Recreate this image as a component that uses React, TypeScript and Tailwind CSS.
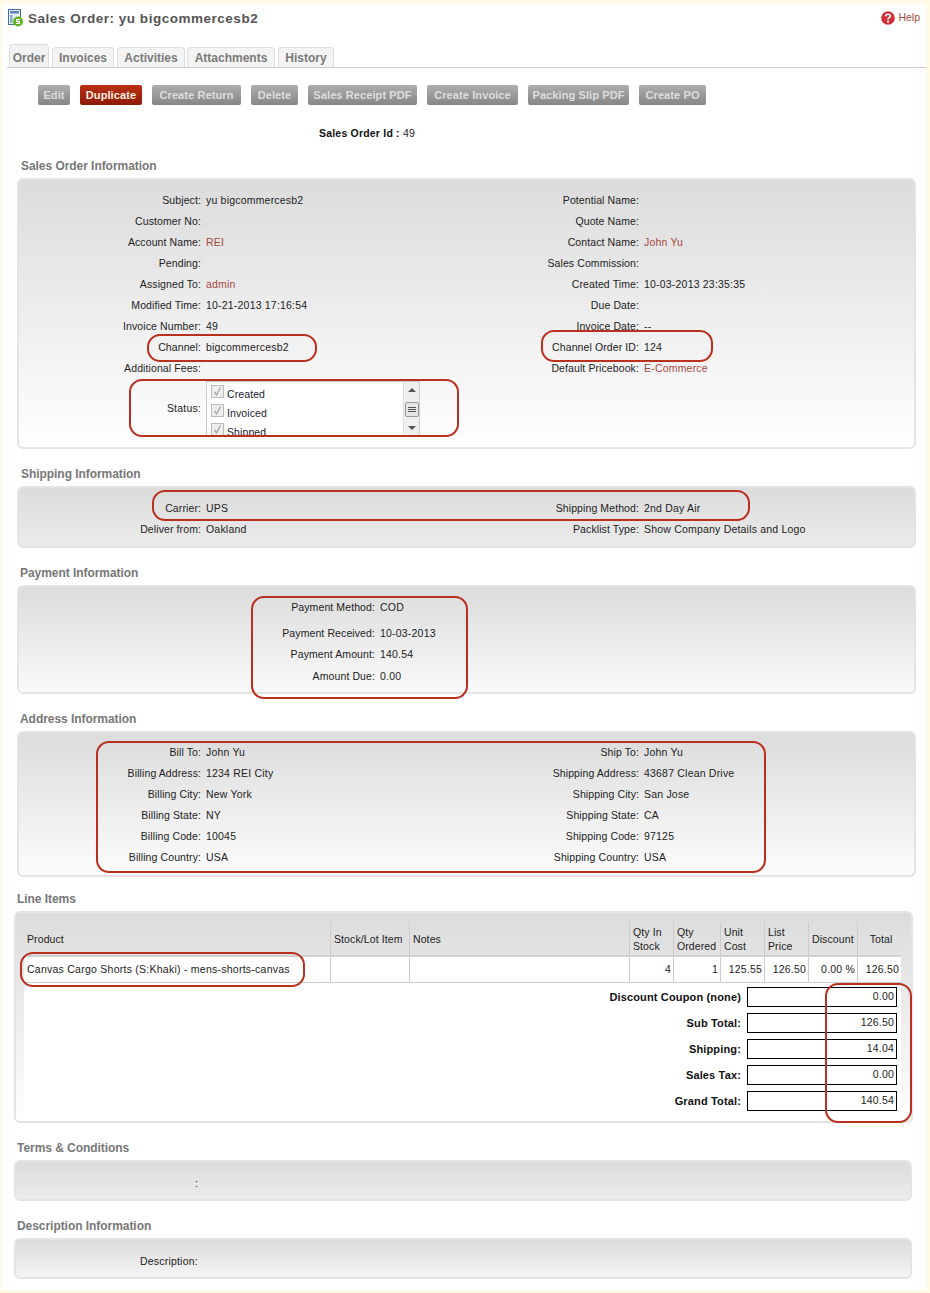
const font = "font-['Liberation_Sans',Arial,sans-serif]";

const Oval = ({ className }: { className: string }) => (
  <div className={`absolute border-2 border-[#b9301f] rounded-[13px] pointer-events-none ${className}`}></div>
);

const Row = ({
  label,
  value,
  label2,
  value2,
  red,
  red2,
}: {
  label?: string;
  value?: string;
  label2?: string;
  value2?: string;
  red?: boolean;
  red2?: boolean;
}) => (
  <div className="flex items-center h-[21px]">
    <div className="w-[182px] text-right tracking-[0.1px]">{label}</div>
    <div className={`ml-[5px] w-[233px] ${red ? "text-[#a5483d]" : ""}`}>{value}</div>
    <div className="w-[200px] text-right tracking-[0.1px]">{label2}</div>
    <div className={`ml-[5px] ${red2 ? "text-[#a5483d]" : ""}`}>{value2}</div>
  </div>
);

const Panel = ({
  title,
  className,
  titleClass = "ml-[4px]",
  children,
}: {
  title: string;
  className: string;
  titleClass?: string;
  children?: React.ReactNode;
}) => (
  <section>
    <h2 className={`text-[12px] leading-[14px] font-bold tracking-[-0.05px] text-[#777] mb-[5px] ${titleClass}`}>{title}</h2>
    <div className={`border-2 border-[#e4e4e4] rounded-[6px] bg-gradient-to-b from-[#dcdcdc] ${className}`}>
      {children}
    </div>
  </section>
);

const Check = ({ label }: { label: string }) => (
  <div className="flex items-end h-[19px]">
    <span className="w-[13px] h-[13px] border border-[#bbb] bg-[#eee] flex items-center justify-center ml-[4px] mb-[3px]">
      <svg width="11" height="11" viewBox="0 0 11 11">
        <path d="M2.5 6 L4.5 9 L8.5 1.5" fill="none" stroke="#aaa" strokeWidth="1.4" />
      </svg>
    </span>
    <span className="ml-[3px] text-[#223] leading-[14px] tracking-[0.1px]">{label}</span>
  </div>
);

const buttons = [
  { name: "Edit", w: "w-[32px]" },
  { name: "Duplicate", w: "w-[62px]" },
  { name: "Create Return", w: "w-[89px]" },
  { name: "Delete", w: "w-[47px]" },
  { name: "Sales Receipt PDF", w: "w-[109px]" },
  { name: "Create Invoice", w: "w-[91px]" },
  { name: "Packing Slip PDF", w: "w-[101px]" },
  { name: "Create PO", w: "w-[67px]" },
];

const tabs = [
  { name: "Invoices", w: "ml-[3px] w-[62px]" },
  { name: "Activities", w: "ml-[3px] w-[68px]" },
  { name: "Attachments", w: "ml-[2px] w-[88px]" },
  { name: "History", w: "ml-[3px] w-[56px]" },
];

const lineCols = [
  { head: "Qty In\nStock", val: "4", w: "w-[44px]" },
  { head: "Qty\nOrdered", val: "1", w: "w-[47px]" },
  { head: "Unit\nCost", val: "125.55", w: "w-[44px]" },
  { head: "List\nPrice", val: "126.50", w: "w-[44px]" },
  { head: "Discount", val: "0.00 %", w: "w-[49px]" },
  { head: "Total", val: "126.50", w: "w-[44px]" },
];

const totals = [
  ["Discount Coupon (none)", "0.00"],
  ["Sub Total:", "126.50"],
  ["Shipping:", "14.04"],
  ["Sales Tax:", "0.00"],
  ["Grand Total:", "140.54"],
];

const payment = [
  { label: "Payment Method:", value: "COD", h: "h-[21px]" },
  { label: "Payment Received:", value: "10-03-2013", h: "h-[21px] mt-[5px]" },
  { label: "Payment Amount:", value: "140.54", h: "h-[21px]" },
  { label: "Amount Due:", value: "0.00", h: "h-[23px]" },
];

export default function App() {
  return (
    <div className={`relative w-[930px] h-[1293px] overflow-hidden bg-[#fff9e6] pt-[4px] pl-[2px] pr-[4px] pb-[3px] text-[10.5px] tracking-[0.2px] text-[#222] ${font}`}>
      <div className="bg-white h-full">
        {/* Title */}
        <div className="flex justify-between h-[38px]">
          <div className="flex items-start pt-[5px] pl-[6px]">
            <svg width="15" height="18" viewBox="0 0 15 18">
              <rect x="0.5" y="0.5" width="12" height="15" fill="#e6edf7" stroke="#4a6d9c" />
              <rect x="2" y="2" width="9" height="2.5" fill="#5f86bb" />
              <rect x="2" y="6" width="2.5" height="8" fill="#8fa9cc" />
              <circle cx="10" cy="12.5" r="5" fill="#5cb521" />
              <path d="M12 10.6 H8.6 V12.5 H11.4 V14.4 H8" fill="none" stroke="#fff" strokeWidth="1.1" />
            </svg>
            <h1 className="ml-[5px] mt-[1px] text-[13.5px] leading-[18px] font-bold text-[#555] tracking-[0.52px]">
              Sales Order: yu bigcommercesb2
            </h1>
          </div>
          <div className="flex items-start pt-[7px] pr-[6px] text-[#a5483d] tracking-normal">
            <svg width="14" height="14" viewBox="0 0 14 14">
              <circle cx="7" cy="7" r="6.8" fill="#d22f3a" />
              <path d="M4.7 5.2 C4.8 2.7 9.3 2.6 9.3 5 C9.3 6.6 7 6.6 7 8.4" fill="none" stroke="#fff" strokeWidth="1.7" />
              <circle cx="7" cy="10.7" r="1.1" fill="#fff" />
            </svg>
            <span className="ml-[3px] leading-[12px]">Help</span>
          </div>
        </div>

        {/* Tabs */}
        <div className="flex items-end ml-[5px] h-[26px] border-b border-[#ccc] text-[12px] tracking-normal font-bold text-[#7a7a7a]">
          <div className="ml-[2px] w-[40px] h-[23px] pt-[3px] bg-[#f2f2f2] border border-b-0 border-[#ddd] rounded-t-[4px] flex items-center justify-center">
            Order
          </div>
          {tabs.map((t) => (
            <div
              key={t.name}
              className={`${t.w} h-[20px] bg-[#f4f4f4] border border-b-0 border-[#ddd] rounded-t-[4px] flex items-center justify-center`}
            >
              {t.name}
            </div>
          ))}
        </div>

        {/* Actions */}
        <div className="flex gap-[10px] ml-[36px] mt-[17px] h-[20px]">
          {buttons.map((b) => (
            <div
              key={b.name}
              className={`${b.w} flex items-center justify-center rounded-[2px] text-[11px] whitespace-nowrap font-bold tracking-[0.1px] ${
                b.name === "Duplicate"
                  ? "bg-gradient-to-b from-[#bb2f14] to-[#8e1a08] text-[#fff0e0]"
                  : "bg-gradient-to-b from-[#aeaeae] to-[#868686] text-[#dedede]"
              }`}
            >
              {b.name}
            </div>
          ))}
        </div>

        <div className="ml-[317px] mt-[21px] h-[14px] leading-[14px]">
          <b className="text-[#111]">Sales Order Id :</b> 49
        </div>

        <div className="ml-[15px] mr-[10px] mt-[19px]">
          <Panel title="Sales Order Information" className="to-white h-[271px] pt-[10px]">
            <Row label="Subject:" value="yu bigcommercesb2" label2="Potential Name:" />
            <Row label="Customer No:" label2="Quote Name:" />
            <Row label="Account Name:" value="REI" red label2="Contact Name:" value2="John Yu" red2 />
            <Row label="Pending:" label2="Sales Commission:" />
            <Row label="Assigned To:" value="admin" red label2="Created Time:" value2="10-03-2013 23:35:35" />
            <Row label="Modified Time:" value="10-21-2013 17:16:54" label2="Due Date:" />
            <Row label="Invoice Number:" value="49" label2="Invoice Date:" value2="--" />
            <Row label="Channel:" value="bigcommercesb2" label2="Channel Order ID:" value2="124" />
            <Row label="Additional Fees:" label2="Default Pricebook:" value2="E-Commerce" red2 />
            <div className="flex mt-[2px]">
              <div className="w-[182px] text-right pt-[20px]">Status:</div>
              <div className="ml-[5px] w-[214px] h-[55px] bg-white border border-[#ccc] border-b-0 overflow-hidden flex">
                <div className="flex-1">
                  <Check label="Created" />
                  <Check label="Invoiced" />
                  <Check label="Shipped" />
                </div>
                <div className="w-[16px] bg-[#efefef] border-l border-[#ddd] flex flex-col items-center justify-between py-[6px]">
                  <span className="w-0 h-0 border-x-[4px] border-x-transparent border-b-[4px] border-b-[#555]"></span>
                  <span className="w-[14px] h-[15px] bg-[#e6e6e6] border border-[#999] rounded-[2px] flex flex-col gap-[1px] items-center justify-center">
                    <i className="block w-[8px] h-px bg-[#555]"></i>
                    <i className="block w-[8px] h-px bg-[#555]"></i>
                    <i className="block w-[8px] h-px bg-[#555]"></i>
                  </span>
                  <span className="w-0 h-0 border-x-[4px] border-x-transparent border-t-[4px] border-t-[#555]"></span>
                </div>
              </div>
            </div>
          </Panel>

          <div className="mt-[18px]">
            <Panel title="Shipping Information" className="to-[#ebebeb] h-[62px] pt-[10px]">
              <Row label="Carrier:" value="UPS" label2="Shipping Method:" value2="2nd Day Air" />
              <Row label="Deliver from:" value="Oakland" label2="Packlist Type:" value2="Show Company Details and Logo" />
            </Panel>
          </div>

          <div className="mt-[18px]">
            <Panel title="Payment Information" titleClass="ml-[3px]" className="to-[#fafafa] h-[109px] pt-[10px]">
              <div className="ml-[356px]">
                {payment.map((p) => (
                  <div key={p.label} className={`flex items-center ${p.h}`}>
                    <div className="w-0 flex justify-end whitespace-nowrap tracking-[0.1px]">{p.label}</div>
                    <div className="ml-[5px]">{p.value}</div>
                  </div>
                ))}
              </div>
            </Panel>
          </div>

          <div className="mt-[18px]">
            <Panel title="Address Information" titleClass="ml-[3px]" className="to-[#fcfcfc] h-[146px] pt-[9.4px]">
              <Row label="Bill To:" value="John Yu" label2="Ship To:" value2="John Yu" />
              <Row label="Billing Address:" value="1234 REI City" label2="Shipping Address:" value2="43687 Clean Drive" />
              <Row label="Billing City:" value="New York" label2="Shipping City:" value2="San Jose" />
              <Row label="Billing State:" value="NY" label2="Shipping State:" value2="CA" />
              <Row label="Billing Code:" value="10045" label2="Shipping Code:" value2="97125" />
              <Row label="Billing Country:" value="USA" label2="Shipping Country:" value2="USA" />
            </Panel>
          </div>
        </div>

        <div className="ml-[12px] mr-[13px] mt-[15px]">
          <Panel title="Line Items" titleClass="ml-[3px]" className="to-white h-[212px] pt-[9px] pl-[8px]">
            <div className="flex w-[877px] h-[35px] border-b-2 border-[#d0d0d0] tracking-[0.1px]">
              <div className="w-[306px] pl-[3px] pt-[10px] leading-[14px]">Product</div>
              <div className="w-[79px] border-l border-[#ccc] pl-[3px] pt-[10px] leading-[14px] whitespace-nowrap">Stock/Lot Item</div>
              <div className="w-[220px] border-l border-[#ccc] pl-[3px] pt-[10px] leading-[14px]">Notes</div>
              {lineCols.map((c) => (
                <div
                  key={c.head}
                  className={`${c.w} border-l border-[#ccc] pl-[3px] flex items-center leading-[14px] whitespace-pre-line ${c.head === "Total" ? "justify-center" : ""}`}
                >
                  {c.head}
                </div>
              ))}
            </div>
            <div className="flex w-[877px] h-[26px] bg-white border-b border-[#ccc] items-stretch">
              <div className="w-[306px] pl-[3px] flex items-center whitespace-nowrap tracking-[0.25px]">Canvas Cargo Shorts (S:Khaki) - mens-shorts-canvas</div>
              <div className="w-[79px] border-l border-[#ccc]"></div>
              <div className="w-[220px] border-l border-[#ccc]"></div>
              {lineCols.map((c) => (
                <div key={c.head} className={`${c.w} border-l border-[#ccc] pr-[2px] flex items-center justify-end whitespace-nowrap`}>
                  {c.val}
                </div>
              ))}
            </div>
            <div className="w-[877px] h-[132px] bg-white pt-[4px] flex flex-col gap-[6px]">
              {totals.map(([k, v]) => (
                <div key={k} className="flex items-center justify-end w-[873px] h-[20px]">
                  <span className="font-bold text-[#111] text-[11px] tracking-[0.15px]">{k}</span>
                  <span className="ml-[6px] w-[150px] h-[20px] border border-black bg-white flex items-center justify-end pr-[2px]">
                    {v}
                  </span>
                </div>
              ))}
            </div>
          </Panel>
        </div>

        <div className="ml-[12px] mr-[14px] mt-[18px]">
          <Panel title="Terms & Conditions" titleClass="ml-[3px]" className="to-[#ececec] h-[41px]">
            <div className="ml-[179px] pt-[14px] leading-[14px]">:</div>
          </Panel>
        </div>
        <div className="ml-[12px] mr-[14px] mt-[18px]">
          <Panel title="Description Information" titleClass="ml-[3px]" className="to-[#f5f5f5] h-[41px]">
            <div className="ml-[124px] pt-[14px] leading-[14px]">Description:</div>
          </Panel>
        </div>
      </div>

      {/* Red annotation outlines */}
      <Oval className="left-[147px] top-[334px] w-[170px] h-[28px]" />
      <Oval className="left-[541px] top-[330px] w-[172px] h-[32px]" />
      <Oval className="left-[129px] top-[379px] w-[330px] h-[58px]" />
      <Oval className="left-[152px] top-[490px] w-[598px] h-[31px]" />
      <Oval className="left-[251px] top-[596px] w-[217px] h-[103px]" />
      <Oval className="left-[96px] top-[741px] w-[670px] h-[132px]" />
      <Oval className="left-[20px] top-[952px] w-[285px] h-[35px]" />
      <Oval className="left-[825px] top-[983px] w-[87px] h-[140px]" />
    </div>
  );
}
